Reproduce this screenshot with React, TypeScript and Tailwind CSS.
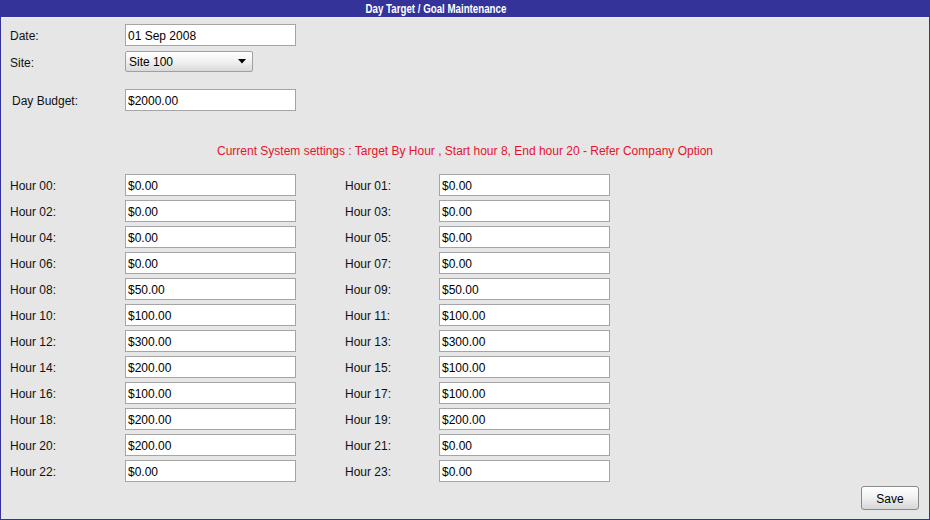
import React from 'react';

const hours: [string, string][] = [
  ['$0.00', '$0.00'],
  ['$0.00', '$0.00'],
  ['$0.00', '$0.00'],
  ['$0.00', '$0.00'],
  ['$50.00', '$50.00'],
  ['$100.00', '$100.00'],
  ['$300.00', '$300.00'],
  ['$200.00', '$100.00'],
  ['$100.00', '$100.00'],
  ['$200.00', '$200.00'],
  ['$200.00', '$0.00'],
  ['$0.00', '$0.00'],
];

const pad = (n: number) => (n < 10 ? '0' + n : String(n));

const inputCls =
  'w-[171px] h-[22px] bg-white border border-[#a5a5a5] px-[2px] pt-[2px] text-[12px] text-black outline-none';

const TextBox = ({ value }: { value: string }) => (
  <input type="text" defaultValue={value} className={inputCls} />
);

const Label = ({ children, className = '' }: { children: React.ReactNode; className?: string }) => (
  <span className={'leading-[14px] pt-[2px] ' + className}>{children}</span>
);

export default function App() {
  return (
    <div
      className="w-[930px] h-[520px] bg-[#e6e6e6] border-x border-b border-[#333399] flex flex-col text-[12px] text-[#111]"
      style={{ fontFamily: '"Liberation Sans", Arial, sans-serif' }}
    >
      <div className="h-[17px] bg-[#333399] flex items-center justify-center pr-[58px] -mx-px">
        <span className="text-white font-bold text-[12px] leading-none pt-px scale-x-[0.81]">
          Day Target / Goal Maintenance
        </span>
      </div>
      <div className="h-px bg-[#eef0e6]" />

      <div className="pl-[9px] mt-[6px] flex flex-col">
        <div className="flex items-center h-[22px]">
          <Label className="w-[115px]">Date:</Label>
          <TextBox value="01 Sep 2008" />
        </div>
        <div className="flex items-center h-[21px] mt-[5px]">
          <Label className="w-[115px]">Site:</Label>
          <div className="relative">
            <select className="appearance-none w-[128px] h-[21px] pl-[3px] pt-px text-[12px] text-black border border-[#a0a0a0] rounded-[2px] bg-gradient-to-b from-white via-[#f1f1f1] to-[#d9d9d9] outline-none">
              <option>Site 100</option>
            </select>
            <svg
              className="absolute right-[7px] top-[8px] pointer-events-none"
              width="8"
              height="5"
              viewBox="0 0 8 5"
            >
              <path d="M0 0h8L4 4.5z" fill="#000" />
            </svg>
          </div>
        </div>
        <div className="flex items-center h-[22px] mt-[17px]">
          <Label className="w-[115px] pl-[2px]">Day Budget:</Label>
          <TextBox value="$2000.00" />
        </div>
      </div>

      <div className="mt-[33px] h-[14px] leading-[14px] text-center text-[#e3142c]">
        Current System settings : Target By Hour , Start hour 8, End hour 20 - Refer Company Option
      </div>

      <div className="pl-[9px] mt-[16px] flex flex-col gap-[4px]">
        {hours.map(([a, b], i) => (
          <div key={i} className="flex items-center h-[22px]">
            <Label className="w-[115px]">Hour {pad(i * 2)}:</Label>
            <TextBox value={a} />
            <Label className="w-[94px] ml-[49px]">Hour {pad(i * 2 + 1)}:</Label>
            <TextBox value={b} />
          </div>
        ))}
      </div>

      <div className="flex justify-end pr-[10px] mt-[4px]">
        <button className="w-[58px] h-[24px] pt-px text-[12px] text-black border border-[#8a8a8a] rounded-[3px] bg-gradient-to-b from-white via-[#f0f0f0] to-[#d6d6d6]">
          Save
        </button>
      </div>
    </div>
  );
}
